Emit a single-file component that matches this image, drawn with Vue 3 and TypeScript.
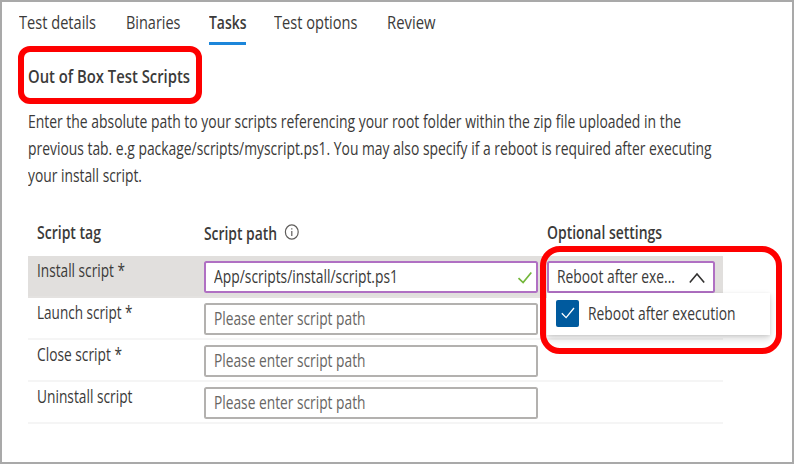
<script setup lang="ts">
import type { Directive } from 'vue'

interface Label { text: string; width: number }
interface ScriptRow { tag: Label; value?: Label }

// Condenses a label horizontally so that it spans the given width.
const vFit: Directive<HTMLElement, number> = {
  mounted(el, { value }) {
    el.style.transform = `scaleX(${value / el.getBoundingClientRect().width})`
  },
}

const tabs: (Label & { slot: number; active?: boolean })[] = [
  { text: 'Test details', width: 77, slot: 107 },
  { text: 'Binaries', width: 54.5, slot: 83 },
  { text: 'Tasks', width: 37.5, slot: 65, active: true },
  { text: 'Test options', width: 83.5, slot: 113 },
  { text: 'Review', width: 48.5, slot: 60 },
]

const intro: Label[] = [
  { text: 'Enter the absolute path to your scripts referencing your root folder within the zip file uploaded in the', width: 653 },
  { text: 'previous tab. e.g package/scripts/myscript.ps1. You may also specify if a reboot is required after executing', width: 683.5 },
  { text: 'your install script.', width: 114 },
]

const rows: ScriptRow[] = [
  { tag: { text: 'Install script *', width: 88 }, value: { text: 'App/scripts/install/script.ps1', width: 184 } },
  { tag: { text: 'Launch script *', width: 95.5 } },
  { tag: { text: 'Close script *', width: 85 } },
  { tag: { text: 'Uninstall script', width: 95.5 } },
]
</script>

<template>
  <main class="page">
    <nav class="tabs">
      <div v-for="t in tabs" :key="t.text" class="tab" :style="{ width: t.slot + 'px' }">
        <span v-fit="t.width" class="label" :class="{ strong: t.active }">{{ t.text }}</span>
        <i v-if="t.active" class="underline"></i>
      </div>
    </nav>

    <h1 class="title"><span v-fit="162" class="label strong">Out of Box Test Scripts</span></h1>

    <div class="intro">
      <p v-for="l in intro" :key="l.text"><span v-fit="l.width" class="label">{{ l.text }}</span></p>
    </div>

    <section class="table">
      <header class="row head">
        <div class="tag"><span v-fit="64" class="label strong">Script tag</span></div>
        <div class="path">
          <div class="path-title"><span v-fit="73" class="label strong">Script path</span></div>
          <svg class="info" width="16" height="18" viewBox="0 0 16 18">
            <ellipse cx="7.8" cy="9" rx="6.4" ry="7.1" />
            <path d="M7.8 8v4.9M7.8 5.2v1.4" />
          </svg>
        </div>
        <div class="opt"><span v-fit="115" class="label strong">Optional settings</span></div>
      </header>

      <div v-for="(r, i) in rows" :key="r.tag.text" class="row" :class="{ selected: i === 0 }">
        <div class="tag"><span v-fit="r.tag.width" class="label">{{ r.tag.text }}</span></div>
        <div class="field" :class="{ filled: r.value }">
          <span v-if="r.value" v-fit="r.value.width" class="label">{{ r.value.text }}</span>
          <span v-else v-fit="151.5" class="label placeholder">Please enter script path</span>
          <svg v-if="r.value" class="valid" width="16" height="14" viewBox="0 0 16 14">
            <path d="M1.5 7.2l4.6 4.4L14.3 1.5" />
          </svg>
        </div>
        <div v-if="i === 0" class="select filled">
          <span v-fit="118" class="label">Reboot after exe...</span>
          <svg class="chevron" width="18" height="12" viewBox="0 0 18 12">
            <path d="M1.8 10.4L9 2l7.2 8.4" />
          </svg>
          <div class="menu">
            <span class="checkbox">
              <svg width="16" height="14" viewBox="0 0 16 14"><path d="M1.8 7.3l4.3 4.3L14 2" /></svg>
            </span>
            <span v-fit="147.5" class="label">Reboot after execution</span>
          </div>
        </div>
      </div>
    </section>

    <div class="callout callout-title"></div>
    <div class="callout callout-option"></div>
  </main>
</template>

<style>
body { margin: 0; background: #fff; }
</style>

<style scoped>
* { box-sizing: border-box; }
.page {
  position: relative;
  width: 794px;
  height: 464px;
  overflow: hidden;
  padding: 8px 0 0 17px;
  border: 2px solid #a9a9a9;
  background: #fff;
  color: #3b3a39;
  font: 17.5px/24px "Open Sans", "Noto Sans", sans-serif;
}
.label {
  display: inline-block;
  flex: none;
  white-space: nowrap;
  transform-origin: 0 50%;
}
.strong { font-weight: 600; color: #3b3a39; }
.tabs { display: flex; height: 54px; }
.tab { flex: none; height: 35px; display: flex; flex-direction: column; justify-content: space-between; align-items: flex-start; }
.underline { width: 37px; height: 3px; background: #1c86da; }
.title { margin: 0 0 0 9px; height: 45px; font: inherit; }
.intro { padding-left: 9px; height: 111px; }
.intro p { margin: 0; height: 27px; }
.table { width: 695px; margin-left: 9px; }
.row {
  display: grid;
  grid-template-columns: 167px 343px 168px;
  height: 42px;
  padding: 5px 0 0 9px;
  border-bottom: 2px solid #f5f5f5;
}
.row.head { height: 36px; padding-top: 0; border: 0; }
.row.selected { background: #e1dfdd; border-color: #e4e2e0; }
.row:not(.head) .tag { margin-top: -3px; }
.path { display: flex; }
.path-title { width: 80px; padding-top: 1px; }
.info { margin-top: 3px; fill: none; stroke: #605e5c; stroke-width: 1.2; }
.field, .select {
  display: flex;
  align-items: center;
  height: 32px;
  padding: 0 0 2px 8px;
  border: 2px solid #b3b1af;
  border-radius: 2.5px;
  background: #fff;
}
.field { width: 334px; position: relative; }
.field.filled, .select.filled { border-color: #b070c3; }
.placeholder { color: #686664; }
.valid { position: absolute; right: 3px; top: 8px; fill: none; stroke: #73b73b; stroke-width: 1.7; }
.select { position: relative; width: 168px; }
.chevron { position: absolute; right: 7px; top: 9px; fill: none; stroke: #323130; stroke-width: 1.6; }
.menu {
  position: absolute;
  z-index: 1;
  left: -2px;
  top: 30px;
  width: 223px;
  height: 42px;
  display: flex;
  align-items: center;
  gap: 8px;
  padding-left: 9px;
  background: #fff;
  box-shadow: 0 4px 8px rgba(0, 0, 0, .15), 0 1px 3px rgba(0, 0, 0, .1);
}
.menu .label { margin: -2px 0 0 1px; }
.checkbox {
  flex: none;
  width: 23px;
  height: 27px;
  margin-top: -2px;
  display: flex;
  align-items: center;
  justify-content: center;
  border-radius: 2px;
  background: #005a9e;
}
.checkbox svg { flex: none; fill: none; stroke: #fff; stroke-width: 1.3; }
.callout { position: absolute; z-index: 2; border: 6px solid #fe0000; }
.callout-title { left: 15.5px; top: 44px; width: 184px; height: 57.5px; border-radius: 12px; }
.callout-option { left: 537.5px; top: 244px; width: 242.5px; height: 107.5px; border-radius: 20px; }
</style>
